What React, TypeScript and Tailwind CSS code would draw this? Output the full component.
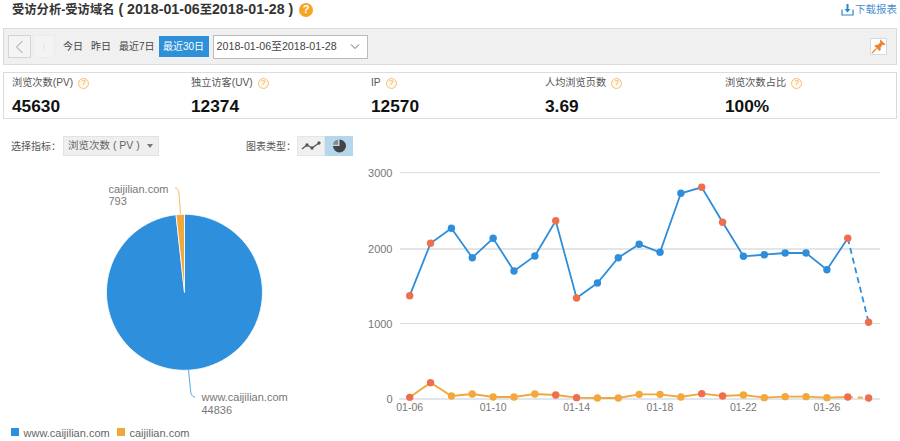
import React from "react";

const blue = [295.7,243.3,228.3,257.7,238.3,271,256,220.7,298,283,257.7,244.3,252.3,193.3,187.3,222.3,256.3,254.7,253,253,269.7,238.3,322.3];
const orange = [712,668,708,702,711,711,702,705,713,714,714,703,703,711,701,708,705,713,710,710,713,711,714].map((v) => v / 3 + 160);
const reds = [0, 1, 7, 8, 14, 15, 21, 22];
const px = (i: number) => 409.7 + i * 20.86;
const poly = (a: number[], from: number, to: number) =>
  a.slice(from, to + 1).map((y, i) => `${px(i + from).toFixed(1)},${y.toFixed(1)}`).join(" ");

function Help({ solid }: { solid?: boolean }) {
  if (solid) {
    return (
      <span className="inline-flex h-[14px] w-[14px] items-center justify-center rounded-full bg-[#f5a623] text-[11px] font-bold leading-none text-white">?</span>
    );
  }
  return (
    <span className="inline-flex h-[11px] w-[11px] items-center justify-center rounded-full border border-[#f3c07a] bg-[#fff8ec] text-[8px] leading-none text-[#eea33a]">?</span>
  );
}

function Stat({ label, value }: { label: string; value: string }) {
  return (
    <div className="flex flex-col">
      <div className="flex h-[18px] items-center gap-[5px] text-[10.200px] text-[#555]">
        <span>{label}</span>
        <Help />
      </div>
      <div className="mt-[4px] text-[17.300px] font-bold leading-[20px] text-[#111]">{value}</div>
    </div>
  );
}

function PieChart() {
  const cx = 184.5, cy = 132.3, r = 78;
  const a = (6.25 * Math.PI) / 180;
  const sx = cx - r * Math.sin(a), sy = cy - r * Math.cos(a);
  return (
    <svg width="360" height="281" viewBox="0 0 360 281" className="block">
      <path d={`M${cx} ${cy} L${cx} ${cy - r} A${r} ${r} 0 1 1 ${sx.toFixed(2)} ${sy.toFixed(2)} Z`} fill="#2e90dc" stroke="#fff" strokeWidth="0.8" />
      <path d={`M${cx} ${cy} L${sx.toFixed(2)} ${sy.toFixed(2)} A${r} ${r} 0 0 1 ${cx} ${cy - r} Z`} fill="#f0a83c" stroke="#fff" strokeWidth="0.8" />
      <path d="M175 28 C178 28 178.500 30 179 34 L180.500 54" fill="none" stroke="#f0a83c" strokeWidth="0.8" />
      <path d="M188.500 210 L190.500 230 C191 235 192 236.500 195 237" fill="none" stroke="#2e90dc" strokeWidth="0.8" />
      <g fontSize="11" fill="#777">
        <text x="108.500" y="33">caijilian.com</text>
        <text x="108.500" y="45">793</text>
        <text x="201.500" y="241">www.caijilian.com</text>
        <text x="201.500" y="254">44836</text>
      </g>
      <rect x="11" y="268" width="8" height="8" fill="#2e90dc" />
      <text x="23.500" y="277" fontSize="11" fill="#666">www.caijilian.com</text>
      <rect x="117" y="268" width="8" height="8" fill="#f0a83c" />
      <text x="129.500" y="277" fontSize="11" fill="#666">caijilian.com</text>
    </svg>
  );
}

function LineChart() {
  const ox = 360, oy = 160;
  const grid = [{ y: 172.7, l: "3000", w: 1 }, { y: 249, l: "2000", w: 1.5 }, { y: 323.5, l: "1000", w: 1 }];
  const ticks = [0, 4, 8, 12, 16, 20];
  return (
    <svg width="540" height="281" viewBox={`${ox} ${oy} 540 281`} className="block">
      {grid.map((g) => (
        <g key={g.l}>
          <line x1="400" x2="880" y1={g.y} y2={g.y} stroke="#dcdcdc" strokeWidth={g.w} />
          <text x="392.500" y={g.y + 4} textAnchor="end" fontSize="11" fill="#777">{g.l}</text>
        </g>
      ))}
      <line x1="399" x2="880" y1="399" y2="399" stroke="#e1e5ee" strokeWidth="2" />
      <text x="392.500" y="403" textAnchor="end" fontSize="11" fill="#777">0</text>
      {ticks.map((t) => (
        <text key={t} x={px(t)} y="411" textAnchor="middle" fontSize="10.500" fill="#777">
          {`01-${String(6 + t).padStart(2, "0")}`}
        </text>
      ))}
      <polyline points={poly(orange, 0, 21)} fill="none" stroke="#f0a83c" strokeWidth="1.8" />
      <polyline points={poly(orange, 21, 22)} fill="none" stroke="#f0a83c" strokeWidth="1.8" strokeDasharray="5 5" />
      <polyline points={poly(blue, 0, 21)} fill="none" stroke="#2e8edb" strokeWidth="1.8" />
      <polyline points={poly(blue, 21, 22)} fill="none" stroke="#2e8edb" strokeWidth="1.8" strokeDasharray="6 4" />
      {orange.map((y, i) => (
        <circle key={i} cx={px(i)} cy={y} r="3.700" fill={reds.includes(i) ? "#ef6f4c" : "#f3a83c"} />
      ))}
      {blue.map((y, i) => (
        <circle key={i} cx={px(i)} cy={y} r="3.700" fill={reds.includes(i) ? "#ef6f4c" : "#2e8edb"} />
      ))}
    </svg>
  );
}

export default function App() {
  return (
    <div className="h-[441px] w-[900px] overflow-hidden bg-white font-['Liberation_Sans','Noto_Sans_CJK_SC',sans-serif] text-[10px] text-[#444]">
      <header className="flex h-[28px] items-start justify-between pl-[12px] pr-[3px] pt-px">
        <div className="flex h-[17px] items-center gap-[6px]">
          <h1 className="whitespace-nowrap text-[14.200px] font-bold leading-[17px] text-[#333]">
            <span className="text-[12.300px]">受访分析-受访域名</span> ( 2018-01-06<span className="text-[12.300px]">至</span>2018-01-28 )
          </h1>
          <Help solid />
        </div>
        <div className="flex h-[17px] items-center gap-[1px] text-[10.500px] text-[#4a90d0]">
          <svg width="13" height="13" viewBox="0 0 13 13" fill="none" stroke="#2f86cc">
            <path d="M1 6.500V12H12V6.500" strokeWidth="1.200" />
            <path d="M6.500 1V7" strokeWidth="2" />
            <path d="M3.500 6L6.500 9.500L9.500 6Z" fill="#2f86cc" stroke="none" />
          </svg>
          <span>下载报表</span>
        </div>
      </header>

      <div className="mx-[3px] flex h-[37px] items-center justify-between border border-[#dcdcdc] bg-[#f0f0f0] pl-[4px] pr-[9px]">
        <div className="flex items-center">
          <button className="flex h-[23px] w-[23px] items-center justify-center border border-[#d4d4d4] bg-[#f4f4f4] text-[#bbb]">
            <svg width="9" height="14" viewBox="0 0 9 14" fill="none" stroke="#bdbdbd" strokeWidth="1.100"><path d="M7.500 1L1.500 7L7.500 13" /></svg>
          </button>
          <button className="ml-[2px] flex h-[23px] w-[22px] items-center justify-center border border-[#ececec] bg-[#f3f3f3]">
            <svg width="4" height="6" viewBox="0 0 4 6" fill="none" stroke="#dedede"><path d="M1 1L3 3L1 5" /></svg>
          </button>
          <span className="ml-[8px] whitespace-nowrap text-[#444]">今日</span>
          <span className="ml-[8px] whitespace-nowrap text-[#444]">昨日</span>
          <span className="ml-[8px] whitespace-nowrap text-[#444]">最近7日</span>
          <span className="ml-[4px] flex h-[21px] w-[50px] items-center justify-center whitespace-nowrap bg-[#2e90d8] text-white">最近30日</span>
          <div className="ml-[4px] flex h-[24px] w-[155px] items-center justify-between border border-[#bbb] bg-white pl-[3px] pr-[7px] text-[10.700px] text-[#444]">
            <span className="whitespace-nowrap">2018-01-06至2018-01-28</span>
            <svg width="10" height="6" viewBox="0 0 10 6" fill="none" stroke="#666"><path d="M1 .500L5 4.500L9 .500" /></svg>
          </div>
        </div>
        <div className="flex h-[17px] w-[17px] items-center justify-center border border-[#d8d8d8] bg-white">
          <svg width="15" height="15" viewBox="0 0 15 15">
            <path d="M9.500 .500L14.500 5.500L13 6.200L11.500 5.800L9.500 8.800L9.800 11L8.500 12L3.500 7L4.500 5.800L6.500 6L9.300 3.500L8.800 2Z" fill="#ee8434" />
            <path d="M5.500 9.500L1 14" stroke="#ee8434" strokeWidth="1.300" />
          </svg>
        </div>
      </div>

      <div className="mx-[3px] mt-[7px] grid h-[47px] grid-cols-[179px_180px_174px_180px_1fr] items-start border border-[#dcdcdc] pl-[8px] pt-[1px]">
        <Stat label="浏览次数(PV)" value="45630" />
        <Stat label="独立访客(UV)" value="12374" />
        <Stat label="IP" value="12570" />
        <Stat label="人均浏览页数" value="3.69" />
        <Stat label="浏览次数占比" value="100%" />
      </div>

      <div className="mt-[17px] flex h-[20px] items-center whitespace-nowrap pl-[11px] text-[10px] text-[#555]">
        <span className="w-[52px]">选择指标：</span>
        <div className="flex h-[20px] w-[96px] items-center justify-between border border-[#e2e2e2] bg-[#efefef] pl-[4px] pr-[5px] text-[#666]">
          <span className="text-[10.500px]">浏览次数 ( PV )</span>
          <span className="h-0 w-0 border-x-[3.500px] border-t-[4px] border-x-transparent border-t-[#777]" />
        </div>
        <span className="ml-[87px] w-[51px]">图表类型：</span>
        <div className="flex h-[20px]">
          <div className="flex w-[28px] items-center justify-center border border-[#e5e5e5] bg-[#f0f0f0]">
            <svg width="20" height="10" viewBox="0 0 20 10" fill="#555" stroke="#555" strokeWidth="1.300">
              <path d="M1 8L6 4L11 7L18 2" fill="none" />
              <circle cx="6" cy="4" r="1" />
              <circle cx="11" cy="7" r="1" />
              <circle cx="18" cy="2" r="1" />
            </svg>
          </div>
          <div className="flex w-[28px] items-center justify-center bg-[#b4d7ec]">
            <svg width="14" height="14" viewBox="0 0 14 14">
              <path d="M7.500 .500A6.500 6.500 0 1 1 1 7H7.500Z" fill="#444" />
              <path d="M6 .800V5.800H1A5.500 5.500 0 0 1 6 .800Z" fill="#888" />
            </svg>
          </div>
        </div>
      </div>

      <div className="-mt-[1px] flex h-[286px] items-start pt-[5px]">
        <PieChart />
        <LineChart />
      </div>
    </div>
  );
}
